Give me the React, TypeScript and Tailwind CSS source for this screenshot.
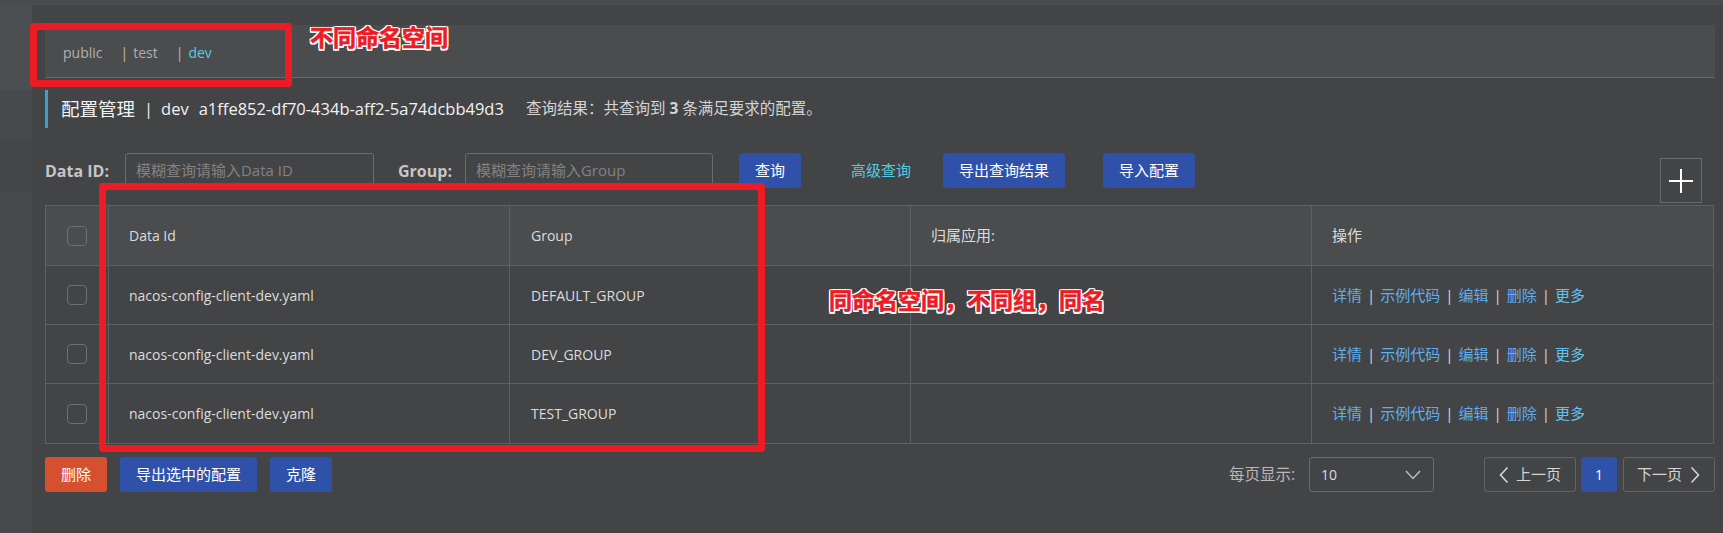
const ROWS = [
  { dataId: "nacos-config-client-dev.yaml", group: "DEFAULT_GROUP" },
  { dataId: "nacos-config-client-dev.yaml", group: "DEV_GROUP" },
  { dataId: "nacos-config-client-dev.yaml", group: "TEST_GROUP" },
];

const ACTIONS = ["详情", "示例代码", "编辑", "删除", "更多"];

const OUTLINE =
  "[-webkit-text-stroke:0.6px_#ed1c24] [text-shadow:-1.5px_-1.5px_0_#fff,1.5px_-1.5px_0_#fff,-1.5px_1.5px_0_#fff,1.5px_1.5px_0_#fff,0_1.5px_0_#fff,0_-1.5px_0_#fff,1.5px_0_0_#fff,-1.5px_0_0_#fff]";

function Checkbox() {
  return <div className="size-[20px] rounded-[4px] border border-[#6e6f71]" />;
}

function Btn({ children, className = "" }: { children: React.ReactNode; className?: string }) {
  return (
    <button
      className={`flex h-[35px] items-center rounded-[3px] bg-[#2f51a9] px-4 text-[15px] text-white ${className}`}
    >
      {children}
    </button>
  );
}

export default function App() {
  return (
    <div className="relative h-[533px] w-full overflow-hidden bg-[#434446] font-['Open_Sans','Noto_Sans_CJK_SC',sans-serif]">
      <div className="h-[5px] bg-[#4a4b4d]" />
      <div className="flex h-[528px]">
        {/* sidebar edge */}
        <aside className="flex w-[32px] shrink-0 flex-col">
          <div className="h-[85px] bg-[#4c4f52]" />
          <div className="h-[50px] bg-[#47494c]" />
          <div className="h-[52px] bg-[#444649]" />
          <div className="flex-1 bg-[#48494c]" />
        </aside>

        <main className="flex-1 pl-[13px] pr-[8px] pt-[20px]">
          {/* namespaces */}
          <div className="flex h-[53px] items-center border-b border-[#6a6a6a] bg-[#4b4c4e] pl-[18px] pt-[3px] text-[14px] text-[#b0b0b0]">
            <span>public</span>
            <span className="ml-[18px] text-[#c2b8a8]">|</span>
            <span className="ml-[5px]">test</span>
            <span className="ml-[18px] text-[#c2b8a8]">|</span>
            <span className="ml-[5px] text-[#52cde2]">dev</span>
          </div>

          {/* title */}
          <div className="mt-[12px] flex h-[38px] items-center border-l-[3px] border-[#3b9fcf] pl-[13px] text-[#f2f2f2]">
            <span className="text-[18.5px]">配置管理</span>
            <span className="ml-[9px] text-[16.5px]">|</span>
            <span className="ml-[8px] text-[16.5px]">dev</span>
            <span className="ml-[10px] text-[16.5px]">a1ffe852-df70-434b-aff2-5a74dcbb49d3</span>
            <span className="ml-[22px] text-[15.5px] text-[#d4d4d4]">
              查询结果：共查询到 <b className="font-bold">3</b> 条满足要求的配置。
            </span>
          </div>

          {/* filters */}
          <div className="mt-[25px] flex h-[50px] items-start">
            <label className="flex h-[35px] items-center text-[16px] font-bold text-[#c6c6c6]">Data ID:</label>
            <div className="ml-[16px] flex h-[35px] w-[249px] items-center rounded-[3px] border border-[#6a6b6d] pl-[10px] text-[15px] text-[#828282]">
              模糊查询请输入Data ID
            </div>
            <label className="ml-[24px] flex h-[35px] items-center text-[16px] font-bold text-[#c6c6c6]">Group:</label>
            <div className="ml-[13px] flex h-[35px] w-[248px] items-center rounded-[3px] border border-[#6a6b6d] pl-[10px] text-[15px] text-[#828282]">
              模糊查询请输入Group
            </div>
            <Btn className="ml-[26px]">查询</Btn>
            <span className="ml-[50px] flex h-[35px] items-center text-[15px] text-[#52cde2]">高级查询</span>
            <Btn className="ml-[32px]">导出查询结果</Btn>
            <Btn className="ml-[38px]">导入配置</Btn>
            <button className="ml-auto mr-[13px] mt-[5px] flex h-[45px] w-[42px] items-center justify-center border border-[#6a6b6d]">
              <svg width="26" height="26" viewBox="0 0 26 26">
                <path d="M13 1v24M1 13h24" stroke="#fff" strokeWidth="2" />
              </svg>
            </button>
          </div>

          {/* table */}
          <div className="mr-[1px] mt-[2px] border border-[#5f6062] text-[14px] text-[#dcdcdc]">
            <div className="grid h-[60px] grid-cols-[63px_1fr_1fr_1fr_1fr] border-b border-[#5f6062] bg-[#4b4c4e]">
              <div className="flex items-center justify-center border-r border-[#5f6062]">
                <Checkbox />
              </div>
              <div className="flex items-center border-r border-[#5f6062] pl-[20px]">Data Id</div>
              <div className="flex items-center border-r border-[#5f6062] pl-[21px]">Group</div>
              <div className="flex items-center border-r border-[#5f6062] pl-[20px] text-[15px]">归属应用:</div>
              <div className="flex items-center pl-[20px] text-[15px]">操作</div>
            </div>
            {ROWS.map((row, i) => (
              <div
                key={row.group}
                className={`grid h-[59px] grid-cols-[63px_1fr_1fr_1fr_1fr] ${i < ROWS.length - 1 ? "border-b border-[#5f6062]" : ""}`}
              >
                <div className="flex items-center justify-center border-r border-[#5f6062]">
                  <Checkbox />
                </div>
                <div className="flex items-center border-r border-[#5f6062] pl-[20px]">{row.dataId}</div>
                <div className="flex items-center border-r border-[#5f6062] pl-[21px]">{row.group}</div>
                <div className="border-r border-[#5f6062]" />
                <div className="flex items-center pl-[20px] text-[15px]">
                  {ACTIONS.map((a, j) => (
                    <span key={a} className="flex items-center">
                      {j > 0 && <span className="mx-[5px] text-[#d8d8d8]">|</span>}
                      <span className={j === 4 ? "text-[#62c2ee]" : "text-[#5eaef0]"}>{a}</span>
                    </span>
                  ))}
                </div>
              </div>
            ))}
          </div>

          {/* footer */}
          <div className="mt-[13px] flex h-[35px] items-center">
            <button className="flex h-[35px] items-center rounded-[3px] bg-[#d4502f] px-4 text-[15px] text-white">
              删除
            </button>
            <Btn className="ml-[13px]">导出选中的配置</Btn>
            <Btn className="ml-[13px]">克隆</Btn>

            <span className="ml-auto text-[15.5px] text-[#b8b8b8]">每页显示:</span>
            <div className="ml-[14px] flex h-[35px] w-[125px] items-center justify-between rounded-[3px] border border-[#6a6b6d] pl-[11px] pr-[12px] text-[14px] text-[#dcdcdc]">
              <span>10</span>
              <svg width="16" height="10" viewBox="0 0 16 10">
                <path d="M1 1l7 7.5L15 1" fill="none" stroke="#bcbcbc" strokeWidth="1.5" />
              </svg>
            </div>
            <button className="ml-[50px] flex h-[35px] w-[92px] items-center rounded-[3px] border border-[#636466] pl-[14px] text-[15px] text-[#d4d4d4]">
              <svg width="10" height="18" viewBox="0 0 10 18">
                <path d="M8.5 1.5L1.5 9l7 7.5" fill="none" stroke="#d4d4d4" strokeWidth="1.6" />
              </svg>
              <span className="ml-[7px]">上一页</span>
            </button>
            <button className="ml-[5px] flex h-[35px] w-[36px] items-center justify-center rounded-[3px] bg-[#2f51a9] text-[14px] text-white">
              1
            </button>
            <button className="ml-[6px] flex h-[35px] w-[92px] items-center rounded-[3px] border border-[#636466] pl-[13px] text-[15px] text-[#d4d4d4]">
              <span>下一页</span>
              <svg className="ml-[8px]" width="10" height="18" viewBox="0 0 10 18">
                <path d="M1.5 1.5L8.5 9l-7 7.5" fill="none" stroke="#d4d4d4" strokeWidth="1.6" />
              </svg>
            </button>
          </div>
        </main>
      </div>

      {/* annotations */}
      <div className="pointer-events-none absolute left-[30px] top-[23px] h-[64px] w-[262px] rounded-[4px] border-[7px] border-[#ed1c24]" />
      <div className={`absolute left-[310px] top-[22px] text-[23px] font-bold leading-[30px] text-[#ed1c24] ${OUTLINE}`}>
        不同命名空间
      </div>
      <div className="pointer-events-none absolute left-[99px] top-[183px] h-[269px] w-[666px] rounded-[4px] border-[7px] border-[#ed1c24]" />
      <div className={`absolute left-[829px] top-[285px] text-[23px] font-bold leading-[30px] text-[#ed1c24] ${OUTLINE}`}>
        同命名空间，不同组，同名
      </div>
    </div>
  );
}
